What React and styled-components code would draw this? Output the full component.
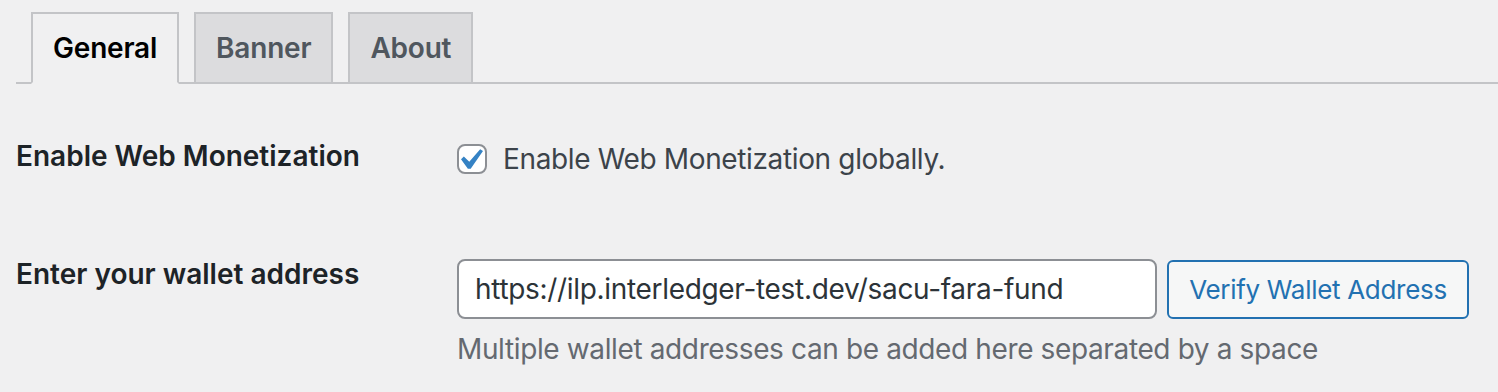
import React from 'react'
import styled, { createGlobalStyle } from 'styled-components'

const GlobalStyle = createGlobalStyle`
  body {
    margin: 0;
    background: #f0f0f1;
    font-family: Inter, "Noto Sans", "Liberation Sans", sans-serif;
    color: #3c434a;
  }
`

const tabs = ['General', 'Banner', 'About']

function App() {
  return (
    <Page>
      <GlobalStyle />
      <TabBar>
        {tabs.map((t, i) => (
          <Tab key={t} $active={i === 0}>{t}</Tab>
        ))}
      </TabBar>
      <Form>
        <Row>
          <Label $bottom={42}>Enable Web Monetization</Label>
          <Field $top={45}>
            <CheckLine>
              <Checkbox>
                <svg width="22" height="20" viewBox="5.78 4.89 10.39 9.32">
                  <path d="M14.83 4.89l1.34.94-5.81 8.38H9.02L5.78 9.67l1.34-1.25 2.57 2.4z" fill="#3582c4" />
                </svg>
              </Checkbox>
              <CheckText>Enable Web Monetization globally.</CheckText>
            </CheckLine>
          </Field>
        </Row>
        <Row>
          <Label $bottom={40}>Enter your wallet address</Label>
          <Field $top={43}>
            <InputLine>
              <Input defaultValue="https://ilp.interledger-test.dev/sacu-fara-fund" />
              <Button>Verify Wallet Address</Button>
            </InputLine>
            <Help>Multiple wallet addresses can be added here separated by a space</Help>
          </Field>
        </Row>
      </Form>
    </Page>
  )
}

export default App

const Page = styled.div`
  padding: 12px 0 0 16px;
`

const TabBar = styled.div`
  display: flex;
  border-bottom: 2px solid #c3c4c7;
`

const Tab = styled.div`
  margin-left: 15px;
  margin-bottom: -2px;
  padding: 10px 20px;
  border: 2px solid #c3c4c7;
  border-bottom: 2px solid ${p => (p.$active ? '#f0f0f1' : '#c3c4c7')};
  background: ${p => (p.$active ? '#f0f0f1' : '#dcdcde')};
  color: ${p => (p.$active ? '#000' : '#50575e')};
  font-size: 28px;
  font-weight: 600;
  line-height: 48px;
  letter-spacing: -0.2px;
  cursor: pointer;
`

const Form = styled.div`
  margin-top: 14px;
`

const Row = styled.div`
  display: grid;
  grid-template-columns: 441px 1fr;
`

const Label = styled.div`
  padding: 40px 0 ${p => p.$bottom}px;
  font-size: 28px;
  font-weight: 600;
  line-height: 36px;
  color: #1d2327;
`

const Field = styled.div`
  padding-top: ${p => p.$top}px;
`

const CheckLine = styled.label`
  display: flex;
  align-items: center;
  gap: 16px;
`

const Checkbox = styled.span`
  box-sizing: border-box;
  width: 30px;
  height: 30px;
  border: 2px solid #8c8f94;
  border-radius: 8px;
  background: #fff;
  display: flex;
  align-items: center;
  justify-content: center;
`

const CheckText = styled.span`
  font-size: 28px;
  line-height: 32px;
  letter-spacing: -0.36px;
  color: #3c434a;
`

const InputLine = styled.div`
  display: flex;
  align-items: center;
  gap: 10px;
`

const Input = styled.input`
  box-sizing: border-box;
  width: 700px;
  height: 60px;
  padding: 0 16px;
  border: 2px solid #8c8f94;
  border-radius: 8px;
  background: #fff;
  font-family: inherit;
  font-size: 28px;
  letter-spacing: -0.32px;
  color: #2c3338;
  outline: none;
`

const Button = styled.button`
  box-sizing: border-box;
  width: 302px;
  height: 59px;
  padding: 0;
  border: 2px solid #2271b1;
  border-radius: 6px;
  background: #f6f7f7;
  font-family: inherit;
  font-size: 26px;
  letter-spacing: -0.3px;
  white-space: nowrap;
  color: #2271b1;
  cursor: pointer;
`

const Help = styled.p`
  margin: 12px 0 0;
  font-size: 28px;
  line-height: 36px;
  letter-spacing: -0.37px;
  color: #646970;
`
